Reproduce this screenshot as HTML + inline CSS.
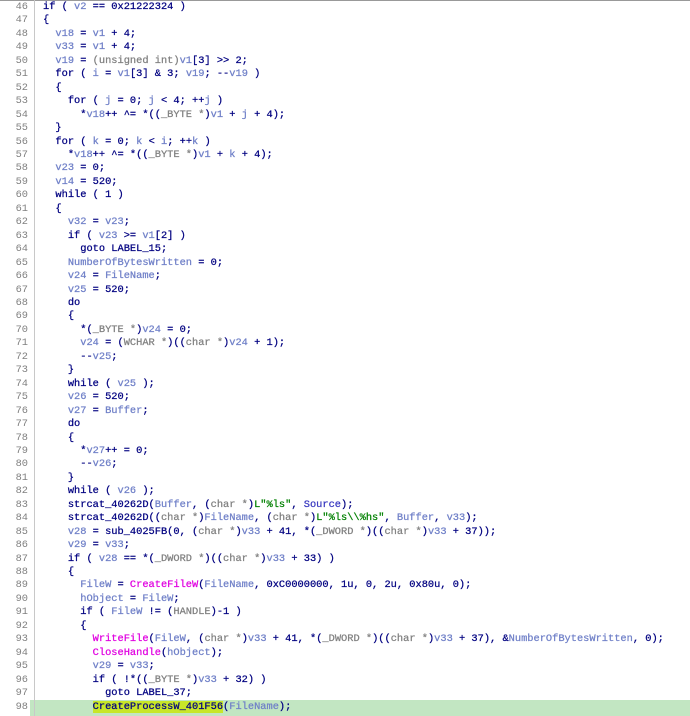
<!DOCTYPE html>
<html><head><meta charset="utf-8"><style>
html,body{margin:0;padding:0;background:#fff;width:690px;height:716px;overflow:hidden;position:relative}
#top{position:absolute;left:0;top:0;width:690px;height:1px;background:#999}
#sep{position:absolute;left:34px;top:0;width:1px;height:716px;background:#c8c8c8}
#hl{position:absolute;left:30px;top:700px;width:660px;height:16px;background:#c2e6c2}
pre{margin:0;position:absolute;top:1px;font-family:"Liberation Mono",monospace;font-size:10.35px;line-height:13.46px;white-space:pre;-webkit-text-stroke:0.25px currentColor}
#nums{left:0;width:28px;text-align:right;color:#808080;-webkit-text-stroke:0}
#code{left:43px;color:#000080}
.v{color:#7080c8}.f{color:#e000e0}.t{color:#808080}.s{color:#008000}.g{color:#3838c0}
.y{background:#c8e628}
</style></head><body>
<div id="top"></div><div id="hl"></div><div id="sep"></div>
<pre id="nums">46
47
48
49
50
51
52
53
54
55
56
57
58
59
60
61
62
63
64
65
66
67
68
69
70
71
72
73
74
75
76
77
78
79
80
81
82
83
84
85
86
87
88
89
90
91
92
93
94
95
96
97
98</pre>
<pre id="code">if ( <span class="v">v2</span> == 0x21222324 )
{
  <span class="v">v18</span> = <span class="v">v1</span> + 4;
  <span class="v">v33</span> = <span class="v">v1</span> + 4;
  <span class="v">v19</span> = <span class="t">(unsigned int)</span><span class="v">v1</span>[3] &gt;&gt; 2;
  for ( <span class="v">i</span> = <span class="v">v1</span>[3] &amp; 3; <span class="v">v19</span>; --<span class="v">v19</span> )
  {
    for ( <span class="v">j</span> = 0; <span class="v">j</span> &lt; 4; ++<span class="v">j</span> )
      *<span class="v">v18</span>++ ^= *((<span class="t">_BYTE *</span>)<span class="v">v1</span> + <span class="v">j</span> + 4);
  }
  for ( <span class="v">k</span> = 0; <span class="v">k</span> &lt; <span class="v">i</span>; ++<span class="v">k</span> )
    *<span class="v">v18</span>++ ^= *((<span class="t">_BYTE *</span>)<span class="v">v1</span> + <span class="v">k</span> + 4);
  <span class="v">v23</span> = 0;
  <span class="v">v14</span> = 520;
  while ( 1 )
  {
    <span class="v">v32</span> = <span class="v">v23</span>;
    if ( <span class="v">v23</span> &gt;= <span class="v">v1</span>[2] )
      goto LABEL_15;
    <span class="v">NumberOfBytesWritten</span> = 0;
    <span class="v">v24</span> = <span class="v">FileName</span>;
    <span class="v">v25</span> = 520;
    do
    {
      *(<span class="t">_BYTE *</span>)<span class="v">v24</span> = 0;
      <span class="v">v24</span> = (<span class="t">WCHAR *</span>)((<span class="t">char *</span>)<span class="v">v24</span> + 1);
      --<span class="v">v25</span>;
    }
    while ( <span class="v">v25</span> );
    <span class="v">v26</span> = 520;
    <span class="v">v27</span> = <span class="v">Buffer</span>;
    do
    {
      *<span class="v">v27</span>++ = 0;
      --<span class="v">v26</span>;
    }
    while ( <span class="v">v26</span> );
    strcat_40262D(<span class="v">Buffer</span>, (<span class="t">char *</span>)<span class="s">L"%ls"</span>, <span class="g">Source</span>);
    strcat_40262D((<span class="t">char *</span>)<span class="v">FileName</span>, (<span class="t">char *</span>)<span class="s">L"%ls\\%hs"</span>, <span class="v">Buffer</span>, <span class="v">v33</span>);
    <span class="v">v28</span> = sub_4025FB(0, (<span class="t">char *</span>)<span class="v">v33</span> + 41, *(<span class="t">_DWORD *</span>)((<span class="t">char *</span>)<span class="v">v33</span> + 37));
    <span class="v">v29</span> = <span class="v">v33</span>;
    if ( <span class="v">v28</span> == *(<span class="t">_DWORD *</span>)((<span class="t">char *</span>)<span class="v">v33</span> + 33) )
    {
      <span class="v">FileW</span> = <span class="f">CreateFileW</span>(<span class="v">FileName</span>, 0xC0000000, 1u, 0, 2u, 0x80u, 0);
      <span class="v">hObject</span> = <span class="v">FileW</span>;
      if ( <span class="v">FileW</span> != (<span class="t">HANDLE</span>)-1 )
      {
        <span class="f">WriteFile</span>(<span class="v">FileW</span>, (<span class="t">char *</span>)<span class="v">v33</span> + 41, *(<span class="t">_DWORD *</span>)((<span class="t">char *</span>)<span class="v">v33</span> + 37), &amp;<span class="v">NumberOfBytesWritten</span>, 0);
        <span class="f">CloseHandle</span>(<span class="v">hObject</span>);
        <span class="v">v29</span> = <span class="v">v33</span>;
        if ( !*((<span class="t">_BYTE *</span>)<span class="v">v33</span> + 32) )
          goto LABEL_37;
        <span class="y">CreateProcessW_401F56</span>(<span class="v">FileName</span>);</pre>
</body></html>
